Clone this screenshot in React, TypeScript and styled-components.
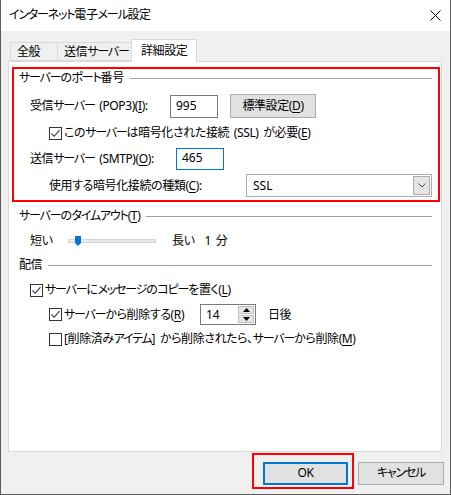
import React from 'react';
import styled, { createGlobalStyle } from 'styled-components';

const GlobalStyle = createGlobalStyle`
  html, body {
    margin: 0;
    padding: 0;
    background: #ffffff;
  }
  * {
    box-sizing: border-box;
  }
`;

const Window = styled.div`
  width: 451px;
  height: 495px;
  display: flex;
  flex-direction: column;
  background: #f0f0f0;
  border: 1px solid #5c5c5c;
  border-top: none;
  font-family: "Noto Sans", "Noto Sans CJK JP", sans-serif;
  font-size: 12px;
  line-height: 16px;
  font-feature-settings: "palt";
  letter-spacing: -0.4px;
  word-spacing: 2px;
  color: #000;
`;

// katakana in the original UI font is much narrower than in Noto CJK
const Kana = styled.span`
  letter-spacing: -1.2px;
`;

const jp = (text: string) =>
  text.split(/([ァ-ヶー]+)/).map((part, i) =>
    /[ァ-ヶー]/.test(part) ? <Kana key={i}>{part}</Kana> : part
  );

const TitleBar = styled.div`
  height: 31px;
  flex: none;
  display: flex;
  align-items: center;
  justify-content: space-between;
  padding: 0 9px 1px 8px;
  background: #ffffff;
`;

const Title = styled.span`
  font-size: 12px;
`;

const CloseIcon = () => (
  <svg width="11" height="11" viewBox="0 0 11 11">
    <path d="M0.5 0.5 L10.5 10.5 M10.5 0.5 L0.5 10.5" stroke="#000" strokeWidth="1" fill="none" />
  </svg>
);

const TabStrip = styled.div`
  display: flex;
  align-items: flex-end;
  padding: 8px 0 0 9px;
  position: relative;
  z-index: 1;
`;

const Tab = styled.div<{ $active?: boolean; $w: number }>`
  width: ${(p) => p.$w}px;
  display: flex;
  align-items: center;
  height: ${(p) => (p.$active ? '23px' : '19px')};
  margin: ${(p) => (p.$active ? '0 -2px -1px -2px' : '0')};
  padding-left: ${(p) => (p.$active ? '9px' : '6px')};
  background: ${(p) => (p.$active ? '#ffffff' : '#f0f0f0')};
  border: 1px solid #d9d9d9;
  border-bottom: ${(p) => (p.$active ? 'none' : '1px solid #d9d9d9')};
  border-right: ${(p) => (p.$active ? '1px solid #d9d9d9' : 'none')};
  position: relative;
  z-index: ${(p) => (p.$active ? 2 : 0)};
`;

const Panel = styled.div`
  width: 434px;
  height: 391px;
  margin-left: 7px;
  background: #ffffff;
  border: 1px solid #d9d9d9;
  padding: 5px 1px 0 3px;
  display: flex;
  flex-direction: column;
  gap: 6px;
`;

const Highlight = styled.div`
  border: 2px solid #ff0000;
`;

const Section = styled.div<{ $inside?: boolean }>`
  display: flex;
  flex-direction: column;
  gap: 4px;
  padding: ${(p) => (p.$inside ? '1px 6px 3px 5px' : '0 8px 0 7px')};
`;

const Legend = styled.div`
  height: 16px;
  margin-bottom: 3px;
  display: flex;
  align-items: center;
  gap: 6px;
  white-space: nowrap;

  &::after {
    content: '';
    flex: 1;
    height: 1px;
    background: #a0a0a0;
  }
`;

const Row = styled.div<{ $indent: number; $h?: number }>`
  display: flex;
  align-items: center;
  height: ${(p) => p.$h ?? 20}px;
  padding-left: ${(p) => p.$indent}px;
  white-space: nowrap;
`;

const Label = styled.span<{ $w?: number }>`
  flex: none;
  width: ${(p) => (p.$w ? `${p.$w}px` : 'auto')};
`;

const U = styled.span`
  text-decoration: underline;
  text-underline-offset: 2px;
`;

const TextBox = styled.div<{ $focused?: boolean; $h?: number }>`
  width: 48px;
  height: ${(p) => p.$h ?? 23}px;
  border: 1px solid ${(p) => (p.$focused ? '#0078d7' : '#7a7a7a')};
  background: #fff;
  display: flex;
  align-items: center;
  padding-left: 5px;
  padding-bottom: 1px;
  letter-spacing: 0;
`;

const Button = styled.div<{ $w?: number }>`
  width: ${(p) => p.$w ?? 86}px;
  height: 23px;
  display: flex;
  align-items: center;
  justify-content: center;
  background: #e1e1e1;
  border: 1px solid #adadad;
  padding-bottom: 1px;
`;

const DefaultButton = styled(Button)`
  border: 2px solid #0078d7;
`;

const SideButton = styled(Button)`
  margin-left: 12px;
  height: 24px;
`;

const CancelButton = styled(Button)`
  margin-top: 9px;
`;

const CheckBoxBox = styled.span`
  flex: none;
  width: 13px;
  height: 13px;
  border: 1px solid #333333;
  background: #fff;
  margin-right: 2px;
  display: flex;
  align-items: center;
  justify-content: center;
`;

const Check = ({ checked }: { checked?: boolean }) => (
  <CheckBoxBox>
    {checked && (
      <svg width="11" height="11" viewBox="0 0 11 11">
        <path d="M1.5 5.5 L4.2 8.3 L9.5 2.2" stroke="#333" strokeWidth="1.1" fill="none" />
      </svg>
    )}
  </CheckBoxBox>
);

const CheckLabel = styled.span<{ $w?: number }>`
  flex: none;
  display: flex;
  align-items: center;
  width: ${(p) => (p.$w ? `${p.$w}px` : 'auto')};
`;

const Select = styled.div`
  width: 186px;
  height: 23px;
  border: 1px solid #adadad;
  background: #fff;
  display: flex;
  align-items: center;
  justify-content: space-between;
  padding: 0 1px 0 6px;
  letter-spacing: 0;
`;

const SelectArrow = styled.div`
  width: 17px;
  height: 19px;
  background: #e5e5e5;
  border: 1px solid #acacac;
  display: flex;
  align-items: center;
  justify-content: center;
`;

const Track = styled.div`
  position: relative;
  width: 88px;
  height: 4px;
  margin-right: 16px;
  background: #e7eaea;
  border: 1px solid #d6d6d6;
`;

const Thumb = styled.svg`
  position: absolute;
  left: 6px;
  top: -4px;
`;

const Spinner = styled.div`
  width: 56px;
  height: 21px;
  border: 1px solid #7a7a7a;
  background: #fff;
  display: flex;
  align-items: stretch;
  padding: 1px;
  letter-spacing: 0;
`;

const SpinValue = styled.span`
  flex: 1;
  display: flex;
  align-items: center;
  padding-left: 4px;
`;

const SpinButtons = styled.div`
  width: 16px;
  display: flex;
  flex-direction: column;
  gap: 1px;
`;

const SpinButton = styled.div`
  flex: 1;
  background: #e5e5e5;
  border: 1px solid #c0c0c0;
  display: flex;
  align-items: center;
  justify-content: center;
`;

const Suffix = styled.span`
  margin-left: 12px;
`;

const Gap = styled.span<{ $w: number }>`
  display: inline-block;
  width: ${(p) => p.$w}px;
`;

const Footer = styled.div`
  display: flex;
  align-items: flex-start;
  justify-content: flex-end;
  gap: 4px;
  padding: 1px 6px 0 0;
`;

const OkHighlight = styled(Highlight)`
  width: 102px;
  height: 36px;
  padding: 7px 4px 2px 9px;
`;

const Tri = ({ up }: { up?: boolean }) => (
  <svg width="7" height="4" viewBox="0 0 7 4">
    <path d={up ? 'M0 4 L3.5 0 L7 4 Z' : 'M0 0 L3.5 4 L7 0 Z'} fill="#000" />
  </svg>
);

const App: React.FC = () => {
  return (
    <>
      <GlobalStyle />
      <Window>
        <TitleBar>
          <Title>{jp('インターネット電子メール設定')}</Title>
          <CloseIcon />
        </TitleBar>

        <TabStrip>
          <Tab $w={47}>全般</Tab>
          <Tab $w={76}>{jp('送信サーバー')}</Tab>
          <Tab $w={66} $active>詳細設定</Tab>
        </TabStrip>

        <Panel>
          <Highlight>
            <Section $inside>
              <Legend><span>{jp('サーバーのポート番号')}</span></Legend>
              <Row $indent={11} $h={26}>
                <Label $w={140}>{jp('受信サーバー (POP3)(')}<U>I</U>):</Label>
                <TextBox>995</TextBox>
                <SideButton>標準設定(<U>D</U>)</SideButton>
              </Row>
              <Row $indent={30}>
                <CheckLabel>
                  <Check checked />
                  <span>{jp('このサーバーは暗号化された接続 (SSL) が必要(')}<U>E</U>)</span>
                </CheckLabel>
              </Row>
              <Row $indent={11} $h={23}>
                <Label $w={146}>{jp('送信サーバー (SMTP)(')}<U>O</U>):</Label>
                <TextBox $focused $h={22}>465</TextBox>
              </Row>
              <Row $indent={30} $h={23}>
                <Label $w={197}>使用する暗号化接続の種類(<U>C</U>):</Label>
                <Select>
                  SSL
                  <SelectArrow>
                    <svg width="8" height="5" viewBox="0 0 8 5">
                      <path d="M0.5 0.5 L4 4 L7.5 0.5" stroke="#444" strokeWidth="1" fill="none" />
                    </svg>
                  </SelectArrow>
                </Select>
              </Row>
            </Section>
          </Highlight>

          <Section>
            <Legend><span>{jp('サーバーのタイムアウト(')}<U>T</U>)</span></Legend>
            <Row $indent={11}>
              <Label $w={38}>短い</Label>
              <Track>
                <Thumb width="6" height="10" viewBox="0 0 6 10">
                  <path d="M0 0 H6 V7 L3 10 L0 7 Z" fill="#0078d7" />
                </Thumb>
              </Track>
              <span>長い<Gap $w={10} />1 分</span>
            </Row>
          </Section>

          <Section>
            <Legend><span>配信</span></Legend>
            <Row $indent={11}>
              <CheckLabel>
                <Check checked />
                <span>{jp('サーバーにメッセージのコピーを置く(')}<U>L</U>)</span>
              </CheckLabel>
            </Row>
            <Row $indent={30} $h={21}>
              <CheckLabel $w={151}>
                <Check checked />
                <span>{jp('サーバーから削除する(')}<U>R</U>)</span>
              </CheckLabel>
              <Spinner>
                <SpinValue>14</SpinValue>
                <SpinButtons>
                  <SpinButton><Tri up /></SpinButton>
                  <SpinButton><Tri /></SpinButton>
                </SpinButtons>
              </Spinner>
              <Suffix>日後</Suffix>
            </Row>
            <Row $indent={30}>
              <CheckLabel>
                <Check />
                <span>{jp('[削除済みアイテム] から削除されたら、サーバーから削除(')}<U>M</U>)</span>
              </CheckLabel>
            </Row>
          </Section>
        </Panel>

        <Footer>
          <OkHighlight>
            <DefaultButton $w={85}>OK</DefaultButton>
          </OkHighlight>
          <CancelButton>{jp('キャンセル')}</CancelButton>
        </Footer>
      </Window>
    </>
  );
};

export default App;
